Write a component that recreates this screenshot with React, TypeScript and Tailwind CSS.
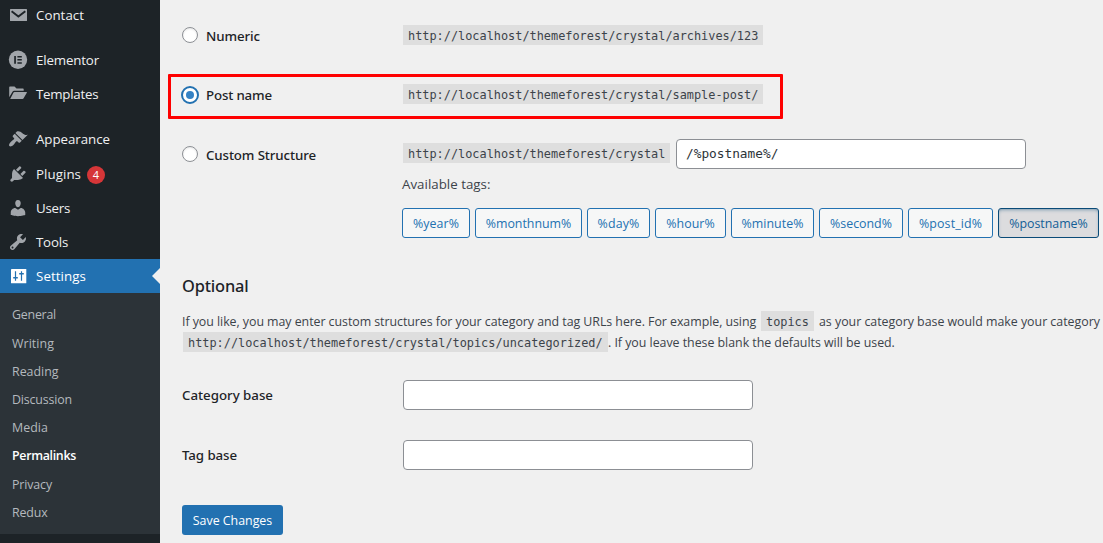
import type { ReactNode } from "react";

function Dash({ d }: { d: string }) {
  return (
    <svg viewBox="0 0 20 20" className="h-5 w-5" fill="currentColor">
      <path d={d} />
    </svg>
  );
}

const mailIcon = (
  <svg viewBox="0 0 20 20" className="h-5 w-5">
    <rect x="2" y="4" width="17" height="12" rx="0.6" fill="currentColor" />
    <path d="M3.6 6.2 L10.4 11.6 L17.3 6.2" fill="none" stroke="#1d2327" strokeWidth="1.9" />
  </svg>
);

const elementorIcon = (
  <svg viewBox="0 0 20 20" className="h-5 w-5">
    <circle cx="10" cy="9.7" r="9.2" fill="currentColor" />
    <path d="M6.2 6h1.7v7.7H6.2zM9.4 6h4.4v1.4H9.4zM9.4 9.1h4.4v1.4H9.4zM9.4 12.3h4.4v1.4H9.4z" fill="#1d2327" />
  </svg>
);

const folderIcon = (
  <svg viewBox="0 0 20 20" className="h-5 w-5" fill="currentColor">
    <path d="M1.2 13.2V3.4c0-.6.4-1 1-1h4.3l2 2h6.2c.6 0 1 .4 1 1v1.4H6.2c-.7 0-1.3.3-1.7.9z" />
    <path d="M2.2 15 5.5 8.5c.2-.4.6-.6 1-.6h11.8c.6 0 .8.4.5.9l-3.2 5.5c-.2.4-.6.7-1.1.7z" />
  </svg>
);

const settingsIcon = (
  <svg viewBox="0 0 20 20" className="h-5 w-5">
    <rect x="3" y="3" width="15.3" height="14.3" rx="0.4" fill="currentColor" />
    <path d="M7.5 5.3v9.4M13.5 5.3v9.4" stroke="#2271b1" strokeWidth="1.2" />
    <path d="M5.2 10.9h4.6v1.6H5.2zM11.2 7h4.6v1.6h-4.6z" fill="#2271b1" />
  </svg>
);

const menu: { label: string; icon: ReactNode; cls: string; row: string; badge?: string }[] = [
  { label: "Contact", icon: mailIcon, cls: "tracking-[0.03px]", row: "mb-[11px] -mt-[2px]" },
  { label: "Elementor", icon: elementorIcon, cls: "tracking-[-0.15px]", row: "" },
  { label: "Templates", icon: folderIcon, cls: "tracking-[-0.25px]", row: "mb-[11px]" },
  {
    label: "Appearance",
    icon: <Dash d="M14.48 11.06L7.41 3.99l1.5-1.5c.5-.56 2.3-.47 3.51.32 1.21.8 1.43 1.28 2.91 2.1 1.18.64 2.45 1.26 4.45.85zm-.71.71L6.7 4.7 4.93 6.47c-.39.39-.39 1.02 0 1.41l1.06 1.06c.39.39.39 1.03 0 1.42-.6.6-1.43 1.11-2.21 1.69-.35.26-.7.53-1.01.84C1.43 14.23.4 16.08 1.4 17.07c.99 1 2.84-.03 4.18-1.36.31-.31.58-.66.85-1.02.57-.78 1.08-1.61 1.69-2.21.39-.39 1.02-.39 1.41 0l1.06 1.06c.39.39 1.02.39 1.41 0z" />,
    cls: "tracking-[-0.04px]",
    row: "mb-px",
  },
  {
    label: "Plugins",
    icon: <Dash d="M13.11 4.36L9.87 7.6 8 5.73l3.24-3.24c.35-.34 1.05-.2 1.56.32.52.51.66 1.21.31 1.55zm-8 1.77l.91-1.12 9.01 9.01-1.19.84c-.71.71-2.63 1.16-3.82 1.16H6.14L4.9 17.26c-.59.59-1.54.59-2.12 0-.59-.58-.59-1.53 0-2.12l1.24-1.24v-3.88c0-1.13.4-3.19 1.09-3.89zm7.26 3.97l3.24-3.24c.34-.35 1.04-.21 1.55.31.52.51.66 1.21.31 1.55l-3.24 3.25z" />,
    cls: "tracking-[0.06px]",
    row: "",
    badge: "4",
  },
  {
    label: "Users",
    icon: <Dash d="M10 9.25c-2.27 0-2.73-3.44-2.73-3.44C7 4.02 7.82 2 9.97 2c2.16 0 2.98 2.02 2.71 3.81 0 0-.41 3.44-2.68 3.44zm0 2.57L12.72 10c2.39 0 4.52 2.33 4.52 4.53v2.49s-3.65 1.13-7.24 1.13c-3.65 0-7.24-1.13-7.24-1.13v-2.49c0-2.25 1.94-4.48 4.47-4.48z" />,
    cls: "tracking-[-0.26px]",
    row: "",
  },
  {
    label: "Tools",
    icon: <Dash d="M16.68 9.77c-1.34 1.34-3.3 1.67-4.95.99l-5.41 6.52c-.99.99-2.59.99-3.58 0s-.99-2.59 0-3.57l6.52-5.42c-.68-1.65-.35-3.61.99-4.95 1.28-1.28 3.12-1.62 4.72-1.06l-2.89 2.89 2.82 2.82 2.86-2.87c.53 1.58.18 3.39-1.08 4.65zM3.81 16.21c.4.39 1.04.39 1.43 0 .4-.4.4-1.04 0-1.43-.39-.4-1.03-.4-1.43 0-.39.39-.39 1.03 0 1.43z" />,
    cls: "tracking-[-0.2px]",
    row: "",
  },
];

const submenu = [
  { label: "General", cls: "tracking-[-0.23px]" },
  { label: "Writing", cls: "tracking-[0.07px]" },
  { label: "Reading", cls: "tracking-[-0.01px]" },
  { label: "Discussion", cls: "tracking-[-0.16px]" },
  { label: "Media", cls: "tracking-[0.06px]" },
  { label: "Permalinks", cls: "tracking-[-0.31px] font-semibold text-white" },
  { label: "Privacy", cls: "tracking-[-0.13px]" },
  { label: "Redux", cls: "tracking-[-0.16px]" },
];

const tags = [
  { label: "%year%", cls: "w-[68px] tracking-[0.06px]" },
  { label: "%monthnum%", cls: "w-[107px] tracking-[-0.03px]" },
  { label: "%day%", cls: "w-[63px] tracking-[0.16px]" },
  { label: "%hour%", cls: "w-[71px] tracking-[0.04px]" },
  { label: "%minute%", cls: "w-[83px] tracking-[0.04px]" },
  { label: "%second%", cls: "w-[84px]" },
  { label: "%post_id%", cls: "w-[85px] tracking-[0.11px]" },
];

function Radio({ checked }: { checked?: boolean }) {
  return checked ? (
    <span className="mt-0.5 -ml-px flex h-[18px] w-[18px] items-center justify-center rounded-full border-2 border-[#2271b1] bg-white">
      <span className="h-2 w-2 rounded-full bg-[#3582c4]" />
    </span>
  ) : (
    <span className="h-4 w-4 rounded-full border border-[#8c8f94] bg-white shadow-[inset_0_1px_2px_rgba(0,0,0,0.1)]" />
  );
}

function Label({ children, cls }: { children: ReactNode; cls: string }) {
  return (
    <span className={`block font-['Noto_Sans',sans-serif] text-[13.3px] leading-5 font-medium text-[#1d2327] ${cls}`}>
      {children}
    </span>
  );
}

function Code({ children, cls = "" }: { children: ReactNode; cls?: string }) {
  return (
    <code className={`block h-5 bg-[#dedede] px-[5px] font-['DejaVu_Sans_Mono',monospace] text-[11.88px] leading-[22px] text-[#3c434a] ${cls}`}>
      {children}
    </code>
  );
}

function Option({ label, cls, checked, children }: { label: string; cls: string; checked?: boolean; children: ReactNode }) {
  return (
    <div className="flex items-center">
      <div className="flex h-5 w-[221px] items-center">
        <Radio checked={checked} />
        <div className={checked ? "ml-[7px] pt-0.5" : "ml-2 pt-0.5"}>
          <Label cls={cls}>{label}</Label>
        </div>
      </div>
      {children}
    </div>
  );
}

export default function App() {
  return (
    <div className="flex h-[543px] w-[1103px] overflow-hidden bg-[#f0f0f0] font-['Open_Sans',sans-serif] whitespace-nowrap">
      <aside className="h-full w-40 shrink-0 bg-[#1d2327] text-[13.3px] text-[#f0f0f1]">
        {menu.map((m) => (
          <div key={m.label} className={`flex h-[34px] items-center pl-2 ${m.row}`}>
            <span className="w-7 text-[#a1a5aa]">{m.icon}</span>
            <span className={`pt-0.5 ${m.cls}`}>{m.label}</span>
            {m.badge && (
              <span className="mt-0.5 ml-[6px] flex h-[18px] w-[18px] items-center justify-center rounded-full bg-[#d63638] text-[11px] text-white">
                {m.badge}
              </span>
            )}
          </div>
        ))}
        <div className="flex h-[34px] items-center bg-[#2271b1] pl-2 text-white">
          <span className="w-7">{settingsIcon}</span>
          <span className="pt-0.5 tracking-[0.09px]">Settings</span>
          <span className="ml-auto border-y-8 border-r-8 border-y-transparent border-r-[#f0f0f0]" />
        </div>
        <div className="h-[241px] bg-[#2c3338] pt-[8.7px] pl-3 text-[12.4px] text-[#b4b9be]">
          {submenu.map((s) => (
            <div key={s.label} className="flex h-[28.2px] items-center">
              <span className={s.cls}>{s.label}</span>
            </div>
          ))}
        </div>
      </aside>

      <main className="flex w-[943px] flex-col pl-[22px] text-[#3c434a]">
        <div className="mt-[25px] h-[49px]">
          <Option label="Numeric" cls="tracking-[-0.09px]">
            <Code>http://localhost/themeforest/crystal/archives/123</Code>
          </Option>
        </div>

        <div className="-ml-[14px] h-[45px] w-[615px] rounded-[1px] border-[3px] border-[#fe0000] pt-[7px] pl-[11px]">
          <Option label="Post name" cls="tracking-[-0.16px]" checked>
            <Code>http://localhost/themeforest/crystal/sample-post/</Code>
          </Option>
        </div>

        <div className="mt-5">
          <Option label="Custom Structure" cls="tracking-[-0.12px]">
            <Code cls="-mt-0.5 w-[267px]">http://localhost/themeforest/crystal</Code>
            <span className="ml-[6px] flex h-[30px] w-[350px] items-center rounded border border-[#8c8f94] bg-white pl-[9px] font-['DejaVu_Sans_Mono',monospace] text-[12.79px] text-[#2c3338]">
              /%postname%/
            </span>
          </Option>
        </div>

        <div className="mt-[5px] ml-[220px] text-[13.3px] leading-5 tracking-[0.02px]">Available tags:</div>

        <div className="mt-[14px] ml-[220px] flex gap-[5px] text-[12.4px] text-[#2271b1]">
          {tags.map((t) => (
            <button key={t.label} className={`h-[30px] rounded-[3px] border border-[#2271b1] bg-[#f6f7f7] pt-0.5 ${t.cls}`}>
              {t.label}
            </button>
          ))}
          <button className="h-[30px] w-[101px] rounded-[3px] border border-[#0a4b78] bg-[#dcdcde] pt-0.5 tracking-[-0.03px] text-[#135e96] shadow-[inset_0_2px_5px_-3px_#0a4b78]">
            %postname%
          </button>
        </div>

        <h2 className="mt-9 font-['Noto_Sans',sans-serif] text-[16.4px] leading-6 font-medium tracking-[-0.16px] text-[#1d2327]">
          Optional
        </h2>

        <div className="mt-[13px] text-[12.4px] leading-[22px] tracking-[-0.05px]">
          <div className="flex h-5">
            <span className="w-[579px]">
              If you like, you may enter custom structures for your category and tag URLs here. For example, using
            </span>
            <Code cls="w-[53px] tracking-normal">topics</Code>
            <span className="ml-[5px] tracking-[-0.02px]">as your category base would make your category</span>
          </div>
          <div className="mt-px flex h-5">
            <Code cls="ml-px w-[425px] tracking-normal">http://localhost/themeforest/crystal/topics/uncategorized/</Code>
            <span className="tracking-[-0.03px]">. If you leave these blank the defaults will be used.</span>
          </div>
        </div>

        <div className="mt-7 flex items-center">
          <span className="w-[221px]">
            <Label cls="tracking-[-0.02px]">Category base</Label>
          </span>
          <span className="h-[30px] w-[350px] rounded border border-[#8c8f94] bg-white" />
        </div>
        <div className="mt-[30px] flex items-center">
          <span className="w-[221px]">
            <Label cls="tracking-[-0.08px]">Tag base</Label>
          </span>
          <span className="h-[30px] w-[350px] rounded border border-[#8c8f94] bg-white" />
        </div>

        <button className="mt-[35px] h-[30px] w-[101px] rounded-[3px] bg-[#2271b1] pt-0.5 text-[12.4px] tracking-[-0.01px] text-white">
          Save Changes
        </button>
      </main>
    </div>
  );
}
